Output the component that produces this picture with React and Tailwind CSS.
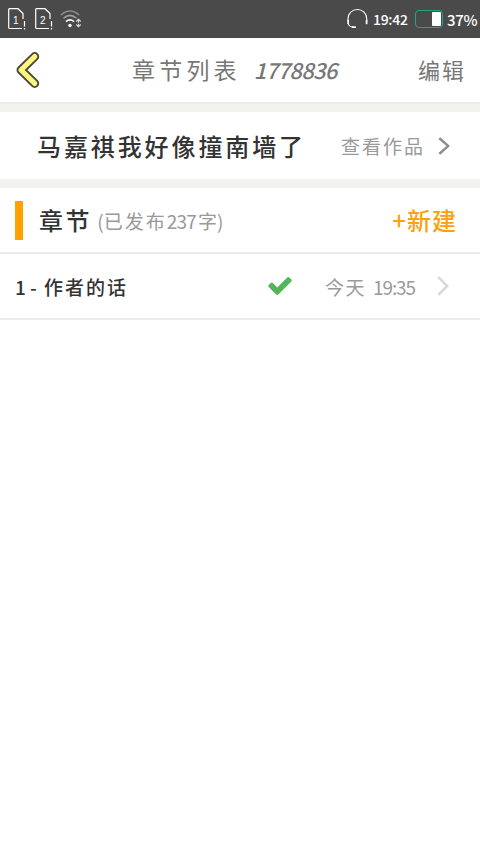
import React from 'react';

const SimIcon = ({ number }) => (
  <svg width="18" height="22" viewBox="0 0 18 22" fill="none">
    <path d="M.7 1.5Q.7.7 1.5.7H10L15 5.5V20.5H1.5Q.7 20.5.7 19.5Z" stroke="#fff" strokeWidth="1.2" />
    <rect x="14" y="11" width="4" height="11" fill="#4a4a4a" />
    <path d="M16.5 13v5.5M16.5 20v1.5" stroke="#fff" strokeWidth="1.2" />
    <text x="7.8" y="15.5" fill="#fff" fontSize="10" textAnchor="middle" fontFamily="Liberation Sans, sans-serif">
      {number}
    </text>
  </svg>
);

const WifiIcon = () => (
  <svg width="22" height="18" viewBox="0 0 22 18" fill="none">
    <path d="M.8 5Q10 -3 19.2 5" stroke="#8b8b8b" strokeWidth="1.5" />
    <path d="M3.5 8.3Q10 2.5 16.5 8.3" stroke="#a0a0a0" strokeWidth="1.5" />
    <path d="M6 11.6Q10 8.3 14 11.6" stroke="#fff" strokeWidth="1.7" />
    <circle cx="10" cy="15.5" r="1.7" fill="#fff" />
    <path d="M16.3 11.5l2.2-2.3 2.2 2.3M18.5 9.5v3.3M16.3 14.5l2.2 2.3 2.2-2.3M18.5 13.8v2.7" stroke="#ddd" strokeWidth="1.1" />
  </svg>
);

const HeadsetIcon = () => (
  <svg width="21" height="20" viewBox="0 0 21 20" fill="none" stroke="#fff" strokeLinecap="round">
    <path d="M1 12V9.5A9.3 8.9 0 0 1 19.7 9.5V12" strokeWidth="1.1" />
    <path d="M1.2 11.5v3M19.6 11.5v3" strokeWidth="1.7" />
    <path d="M1.2 14.5Q2 18 7 18.3" strokeWidth="1.1" />
    <path d="M5.5 18.2h2.7" strokeWidth="1.8" />
  </svg>
);

const BackIcon = () => (
  <svg width="25" height="38" viewBox="0 0 25 38" fill="none" strokeLinecap="round" strokeLinejoin="round">
    <path d="M19.7 5.6L6 19l13.7 13.4" stroke="#4b493e" strokeWidth="9" />
    <path d="M19.7 5.6L6 19l13.7 13.4" stroke="#fff67e" strokeWidth="5.2" />
  </svg>
);

const Chevron = ({ className }) => (
  <svg className={className} viewBox="0 0 12 20" preserveAspectRatio="none" fill="none" stroke="currentColor" strokeWidth="2.6">
    <path d="M1.3 1.2L10.2 10l-8.9 8.8" />
  </svg>
);

const CheckIcon = () => (
  <svg className="ml-auto h-[18px] w-[24px]" viewBox="121 334 1550 1188" fill="#55b559">
    <path d="M1671 566q0 40-28 68l-724 724-136 136q-28 28-68 28t-68-28l-136-136-362-362q-28-28-28-68t28-68l136-136q28-28 68-28t68 28l294 295 656-657q28-28 68-28t68 28l136 136q28 28 28 68z" />
  </svg>
);

const StatusBar = () => (
  <div className="flex h-[38px] items-center bg-[#4a4a4a] pl-2 text-white">
    <SimIcon number="1" />
    <div className="ml-[9px]">
      <SimIcon number="2" />
    </div>
    <div className="ml-[7px]">
      <WifiIcon />
    </div>
    <div className="ml-auto flex items-center">
      <HeadsetIcon />
      <span className="ml-[5px] w-[42px] text-[14px] leading-none font-medium tracking-[-0.3px]">19:42</span>
      <div className="flex h-[18px] w-[28px] justify-end rounded-[4px] border border-[#27a47d] p-px">
        <div className="w-[9px] rounded-[1px] bg-white" />
      </div>
      <span className="ml-[4px] w-[33px] text-[15px] leading-none font-medium tracking-[-0.3px] whitespace-nowrap">37%</span>
    </div>
  </div>
);

const App = () => {
  return (
    <div className="min-h-[854px] w-[480px] overflow-hidden bg-white font-['Noto_Sans_CJK_SC',sans-serif] leading-none whitespace-nowrap">
      <StatusBar />

      <div className="flex h-[64px] items-center pl-[15px] text-[#777]">
        <BackIcon />
        <span className="ml-[92px] pb-[2px] text-[23px] tracking-[4.2px]">章节列表</span>
        <span className="ml-[13px] pb-[2px] text-[22px] font-medium tracking-[-0.7px] italic">1778836</span>
        <span className="mr-[14px] ml-auto pb-[2px] text-[22px] tracking-[2px]">编辑</span>
      </div>
      <div className="h-[10px] border-t-2 border-[#ebebeb] bg-[#f2f3ee]" />

      <div className="flex h-[67px] items-center pl-[37px]">
        <span className="text-[24px] font-medium tracking-[2.9px] text-[#333]">马嘉祺我好像撞南墙了</span>
        <span className="ml-auto text-[19px] tracking-[2px] text-[#999]">查看作品</span>
        <Chevron className="mr-[30px] ml-[13px] h-[18px] w-[12px] text-[#8d8d8d]" />
      </div>
      <div className="h-[9px] bg-[#f2f3ee]" />

      <div className="flex h-[66px] items-center border-b-2 border-[#ebebeb] pl-[15px]">
        <div className="h-[39px] w-[8px] bg-[#ffa200]" />
        <span className="ml-[16px] text-[24px] font-medium tracking-[2.6px] text-[#333]">章节</span>
        <span className="ml-[5px] flex items-center text-[19px] text-[#999]">
          (<span className="tracking-[2px]">已发布</span>
          <span className="tracking-[-0.8px]">237</span>
          <span className="ml-[2px]">字</span>)
        </span>
        <span className="mr-[23px] ml-auto text-[24px] font-medium tracking-[1px] text-[#fba20e]">+新建</span>
      </div>

      <div className="flex h-[66px] items-center border-b-2 border-[#ebebeb] pl-[15px]">
        <span className="text-[19px] font-medium text-[#333]">1 -</span>
        <span className="ml-[7px] text-[19px] font-medium tracking-[2px] text-[#333]">作者的话</span>
        <CheckIcon />
        <span className="ml-[33px] w-[92px] text-[19px] text-[#999]">
          <span className="mr-[7px] tracking-[1.5px]">今天</span>
          <span className="tracking-[-1.1px]">19:35</span>
        </span>
        <Chevron className="mr-[31px] ml-[20px] h-[20px] w-[12px] text-[#d8d8d8]" />
      </div>
    </div>
  );
};

export default App;
